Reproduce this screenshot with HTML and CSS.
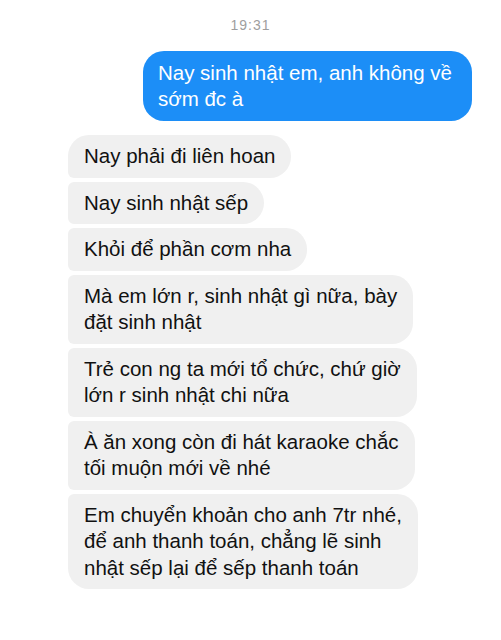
FILE: index.html
```html
<!DOCTYPE html>
<html lang="vi">
<head>
  <meta charset="UTF-8">
  <meta name="viewport" content="width=device-width, initial-scale=1.0">
  <title>Tin nhắn</title>
  <link rel="stylesheet" href="styles.css">
</head>
<body>
  <div class="chat">
    <p class="time">19:31</p>

    <div class="row row-out">
      <div class="bubble bubble-out">Nay sinh nhật em, anh không về<br>sớm đc à</div>
    </div>

    <div class="group">
      <div class="bubble bubble-in">Nay phải đi liên hoan</div>
      <div class="bubble bubble-in">Nay sinh nhật sếp</div>
      <div class="bubble bubble-in">Khỏi để phần cơm nha</div>
      <div class="bubble bubble-in">Mà em lớn r, sinh nhật gì nữa, bày<br>đặt sinh nhật</div>
      <div class="bubble bubble-in">Trẻ con ng ta mới tổ chức, chứ giờ<br>lớn r sinh nhật chi nữa</div>
      <div class="bubble bubble-in">À ăn xong còn đi hát karaoke chắc<br>tối muộn mới về nhé</div>
      <div class="bubble bubble-in">Em chuyển khoản cho anh 7tr nhé,<br>để anh thanh toán, chẳng lẽ sinh<br>nhật sếp lại để sếp thanh toán</div>
    </div>
  </div>
</body>
</html>
```

FILE: styles.css
```css
* {
  margin: 0;
  padding: 0;
  box-sizing: border-box;
}

body {
  font-family: 'Liberation Sans', Arial, sans-serif;
  background-color: #fff;
  color: #111;
  width: 501px;
  height: 640px;
  overflow: hidden;
}

.chat {
  display: flex;
  flex-direction: column;
  padding: 15px 29px 0 68px;
}

.time {
  text-align: center;
  font-size: 14px;
  line-height: 20px;
  letter-spacing: 1px;
  color: #9e9e9e;
  margin-left: -39px;
  margin-bottom: 16px;
}

.row-out {
  display: flex;
  justify-content: flex-end;
  margin-bottom: 14px;
}

.bubble {
  font-size: 20.5px;
  line-height: 26.5px;
  padding: 8px 16px;
  white-space: nowrap;
  border-radius: 20px;
}

.bubble-out {
  background-color: #1c8ef7;
  color: #fff;
  padding: 8.5px 20px 8.5px 15px;
  border-radius: 21px;
}

.group {
  display: flex;
  flex-direction: column;
  align-items: flex-start;
  gap: 4px;
}

.bubble-in {
  background-color: #f0f0f0;
  border-radius: 6px 21px 21px 6px;
}

.bubble-in:first-child {
  border-top-left-radius: 21px;
}

.bubble-in:last-child {
  border-bottom-left-radius: 21px;
}
```
